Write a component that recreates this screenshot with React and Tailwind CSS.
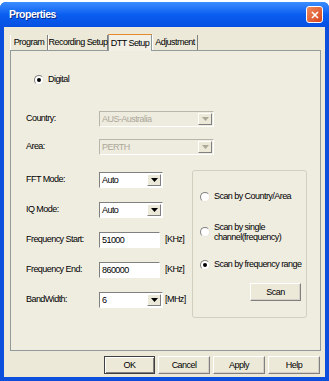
import React from 'react';

const font = { fontFamily: '"Liberation Sans", Arial, sans-serif' };

const Radio = ({ checked }) => (
  <span className="relative inline-flex w-[10px] h-[10px] shrink-0 rounded-full border border-t-[#808080] border-l-[#808080] border-r-[#e8e6dc] border-b-[#e8e6dc] bg-white items-center justify-center">
    {checked && <span className="w-[4px] h-[4px] rounded-full bg-black" />}
  </span>
);

const Arrow = ({ disabled }) => (
  <span className="flex w-[14px] self-stretch items-center justify-center bg-[#ece9d8] border border-t-white border-l-white border-r-[#808080] border-b-[#808080]">
    <svg width="7" height="4" viewBox="0 0 7 4">
      <path d="M0 0h7L3.5 4z" fill={disabled ? '#aca899' : '#000'} />
    </svg>
  </span>
);

const Combo = ({ value, width, disabled }) => (
  <div
    className={`flex h-[16px] items-stretch border ${
      disabled
        ? 'bg-[#eeebdf] text-[#aca899] border-t-[#b9b7ad] border-l-[#b9b7ad] border-r-white border-b-white'
        : 'bg-white text-black border-t-[#808080] border-l-[#808080] border-r-white border-b-white'
    } ${width}`}
  >
    <span className="flex-1 flex items-center pl-[2px] leading-none">{value}</span>
    <span className="flex p-[1px]">
      <Arrow disabled={disabled} />
    </span>
  </div>
);

const Edit = ({ value }) => (
  <div className="flex h-[16px] w-[61px] items-center pl-[2px] bg-white border border-t-[#808080] border-l-[#808080] border-r-white border-b-white leading-none">
    {value}
  </div>
);

const Row = ({ label, children, className = '' }) => (
  <div className={`flex items-center h-[16px] ${className}`}>
    <span className="w-[73px] shrink-0">{label}</span>
    {children}
  </div>
);

const Button = ({ children, primary, className = '' }) => (
  <button
    className={`flex items-center justify-center h-[18px] bg-[#ece9d8] leading-none ${
      primary
        ? 'border border-[#404040] shadow-[inset_1px_1px_0_#fff,inset_-1px_-1px_0_#808080]'
        : 'border border-t-white border-l-white border-r-[#808080] border-b-[#808080] shadow-[inset_-1px_-1px_0_#d4d0c8]'
    } ${className}`}
  >
    {children}
  </button>
);

export default function App() {
  const tabs = [
    { label: 'Program', w: 'w-[38px]' },
    { label: 'Recording Setup', w: 'w-[60px]' },
    { label: 'DTT Setup', w: 'w-[44px]', active: true },
    { label: 'Adjustment', w: 'w-[46px]' },
  ];
  return (
    <div
      className="w-[329px] h-[381px] bg-white pt-[2px] text-[9px] tracking-[-0.55px] text-black overflow-hidden"
      style={font}
    >
      <div className="h-[379px] flex flex-col rounded-t-[6px] bg-[#0b4fdc]">
        {/* Title bar */}
        <div className="h-[25px] flex items-center justify-between pl-[9px] pr-[6px] rounded-t-[6px] bg-gradient-to-b from-[#3b8dff] via-[#0a5ef0] to-[#0650e2]">
          <span className="text-white font-bold text-[10.5px] tracking-[-0.5px] [text-shadow:1px_1px_0_#0a2a8a]">
            Properties
          </span>
          <span className="flex w-[17px] h-[17px] items-center justify-center rounded-[3px] border border-white bg-gradient-to-br from-[#f08a5e] to-[#d4421a]">
            <svg width="8" height="8" viewBox="0 0 8 8">
              <path d="M1 1l6 6M7 1l-6 6" stroke="#fff" strokeWidth="1.6" />
            </svg>
          </span>
        </div>

        {/* Client area */}
        <div className="flex-1 mx-[4px] mb-[4px] bg-[#ece9d8] flex flex-col pl-[6px] pr-[4px]">
          {/* Tabs */}
          <div className="flex items-end h-[23px]">
            {tabs.map((t) => (
              <div
                key={t.label}
                className={`flex items-center justify-center whitespace-nowrap leading-none ${t.w} ${
                  t.active
                    ? 'h-[17px] bg-[#f2f0e6] border border-b-0 border-[#919b9c] border-t-[#e68b2c] -mb-[1px] z-10 relative'
                    : 'h-[15px] border-r border-r-[#808080] border-l border-l-white'
                }`}
              >
                {t.label}
              </div>
            ))}
          </div>

          {/* Panel */}
          <div className="h-[301px] border border-[#919b9c] bg-[#efece0] pl-[15px] flex flex-col">
            <div className="flex items-center gap-[4px] h-[13px] mt-[22px] ml-[8px]">
              <Radio checked />
              <span>Digital</span>
            </div>

            <Row label="Country:" className="mt-[25px]">
              <Combo value="AUS-Australia" width="w-[115px]" disabled />
            </Row>
            <Row label="Area:" className="mt-[12px]">
              <Combo value="PERTH" width="w-[115px]" disabled />
            </Row>

            <div className="flex mt-[15px]">
              <div className="w-[166px] flex flex-col gap-[14px] pt-[2px]">
                <Row label="FFT Mode:">
                  <Combo value="Auto" width="w-[64px]" />
                </Row>
                <Row label="IQ Mode:">
                  <Combo value="Auto" width="w-[64px]" />
                </Row>
                <Row label="Frequency Start:">
                  <Edit value="51000" />
                  <span className="ml-[5px]">[KHz]</span>
                </Row>
                <Row label="Frequency End:">
                  <Edit value="860000" />
                  <span className="ml-[5px]">[KHz]</span>
                </Row>
                <Row label="BandWidth:">
                  <Combo value="6" width="w-[64px]" />
                  <span className="ml-[2px]">[MHz]</span>
                </Row>
              </div>

              {/* Group box */}
              <div className="w-[115px] h-[148px] border border-[#d0d0bf] rounded-[3px] flex flex-col pl-[7px] pr-[2px]">
                <div className="flex items-center gap-[4px] h-[12px] mt-[20px] whitespace-nowrap">
                  <Radio />
                  <span>Scan by Country/Area</span>
                </div>
                <div className="flex items-end gap-[4px] mt-[19px]">
                  <span className="mb-[1px]">
                    <Radio />
                  </span>
                  <span className="leading-[10px]">
                    Scan by single
                    <br />
                    channel(frequency)
                  </span>
                </div>
                <div className="flex items-center gap-[4px] h-[12px] mt-[17px] whitespace-nowrap">
                  <Radio checked />
                  <span>Scan by frequency range</span>
                </div>
                <div className="flex justify-end mt-[12px] pr-[3px]">
                  <Button className="w-[51px]">Scan</Button>
                </div>
              </div>
            </div>
          </div>

          {/* Buttons */}
          <div className="flex justify-end gap-[3px] mt-[5px] pr-[1px]">
            <Button primary className="w-[51px]">OK</Button>
            <Button className="w-[52px]">Cancel</Button>
            <Button className="w-[52px]">Apply</Button>
            <Button className="w-[52px]">Help</Button>
          </div>
        </div>
      </div>
    </div>
  );
}
